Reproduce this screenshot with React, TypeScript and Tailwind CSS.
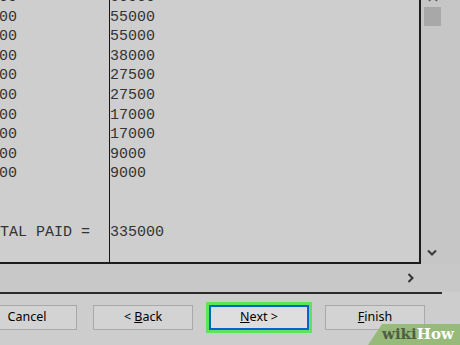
import React from 'react';

const rows = ['60000', '55000', '55000', '38000', '27500', '27500', '17000', '17000', '9000', '9000'];
const left = ['60000', '55000', '55000', '38000', '27500', '27500', '17000', '17000', '18000', '18000'];

const WizardButton: React.FC<{ label: React.ReactNode; active?: boolean }> = ({ label, active }) => (
  <div
    className={
      active
        ? 'w-[100px] h-[25px] shrink-0 flex items-center justify-center border-2 border-[#0a64c8] bg-[#dedede] ring-[3px] ring-[#5fe35f]'
        : 'w-[100px] h-[25px] shrink-0 flex items-center justify-center border border-[#a9a9a9] bg-[#d3d3d3]'
    }
  >
    <span className="text-[12.5px] text-black leading-none">{label}</span>
  </div>
);

const App: React.FC = () => {
  return (
    <div className="relative w-[460px] h-[345px] overflow-hidden bg-[#cdcdcd] flex flex-col font-['Noto_Sans',sans-serif]">
      {/* report view + vertical scrollbar */}
      <div className="flex h-[264px] shrink-0">
        <div className="w-[421px] h-full flex overflow-hidden bg-[#cecece] border-r-2 border-b-2 border-[#1d1d1d] font-['Liberation_Mono',monospace] text-[15px] leading-[19.6px] text-[#333]">
          <div className="w-[110px] h-full shrink-0 border-r border-[#151515] whitespace-pre">
            <div className="-mt-[12px]">
              {left.map((v, i) => (
                <div key={i} className="h-[19.6px] -ml-[28px]">{v}</div>
              ))}
              <div className="h-[19.6px]" />
              <div className="h-[19.6px]" />
              <div className="h-[19.6px] -ml-[18px]">TOTAL PAID =</div>
            </div>
          </div>
          <div className="flex-1 h-full whitespace-nowrap">
            <div className="-mt-[12px]">
              {rows.map((v, i) => (
                <div key={i} className="h-[19.6px]">{v}</div>
              ))}
              <div className="h-[19.6px]" />
              <div className="h-[19.6px]" />
              <div className="h-[19.6px]">335000</div>
            </div>
          </div>
        </div>
        <div className="flex-1 h-full bg-[#c6c6c6] flex flex-col">
          <svg width="10" height="6" viewBox="0 0 10 6" className="ml-[7px] -mt-[4px] shrink-0">
            <polyline points="1,5 5,1 9,5" fill="none" stroke="#555" strokeWidth="1.6" />
          </svg>
          <div className="ml-[3px] mt-[5px] w-[17px] h-[19px] bg-[#a8a8a8]" />
          <div className="flex-1" />
          <svg width="10" height="7" viewBox="0 0 10 7" className="ml-[6px] mb-[8px] shrink-0">
            <polyline points="1,1.5 5,5.5 9,1.5" fill="none" stroke="#3a3a3a" strokeWidth="2" />
          </svg>
        </div>
      </div>

      {/* horizontal scrollbar */}
      <div className="h-[28px] shrink-0 bg-[#c8c8c8] flex items-center">
        <svg width="7" height="10" viewBox="0 0 7 10" className="ml-[407px]">
          <polyline points="1.5,1 5.5,5 1.5,9" fill="none" stroke="#333" strokeWidth="2" />
        </svg>
      </div>

      {/* separator */}
      <div className="w-[442px] h-[2px] shrink-0 bg-[#2b2b2b]" />

      {/* wizard buttons */}
      <div className="flex gap-4 -ml-[23px] pt-[11px]">
        <WizardButton label="Cancel" />
        <WizardButton label={<>&lt; <u>B</u>ack</>} />
        <WizardButton active label={<><u>N</u>ext &gt;</>} />
        <WizardButton label={<><u>F</u>inish</>} />
      </div>

      {/* watermark */}
      <div className="absolute right-0 bottom-0 w-[92px] h-[21px]">
        <svg width="92" height="21" viewBox="0 0 92 21" className="absolute inset-0">
          <polygon points="14,0 92,0 92,21 0,21" fill="#93b874" fillOpacity="0.92" />
        </svg>
        <div className="relative h-full flex items-center pl-[14px] font-['DejaVu_Serif',serif] font-bold text-[15px] leading-none">
          <span className="text-[#4f5e45]">wiki</span>
          <span className="text-white">How</span>
        </div>
      </div>
    </div>
  );
};

export default App;
